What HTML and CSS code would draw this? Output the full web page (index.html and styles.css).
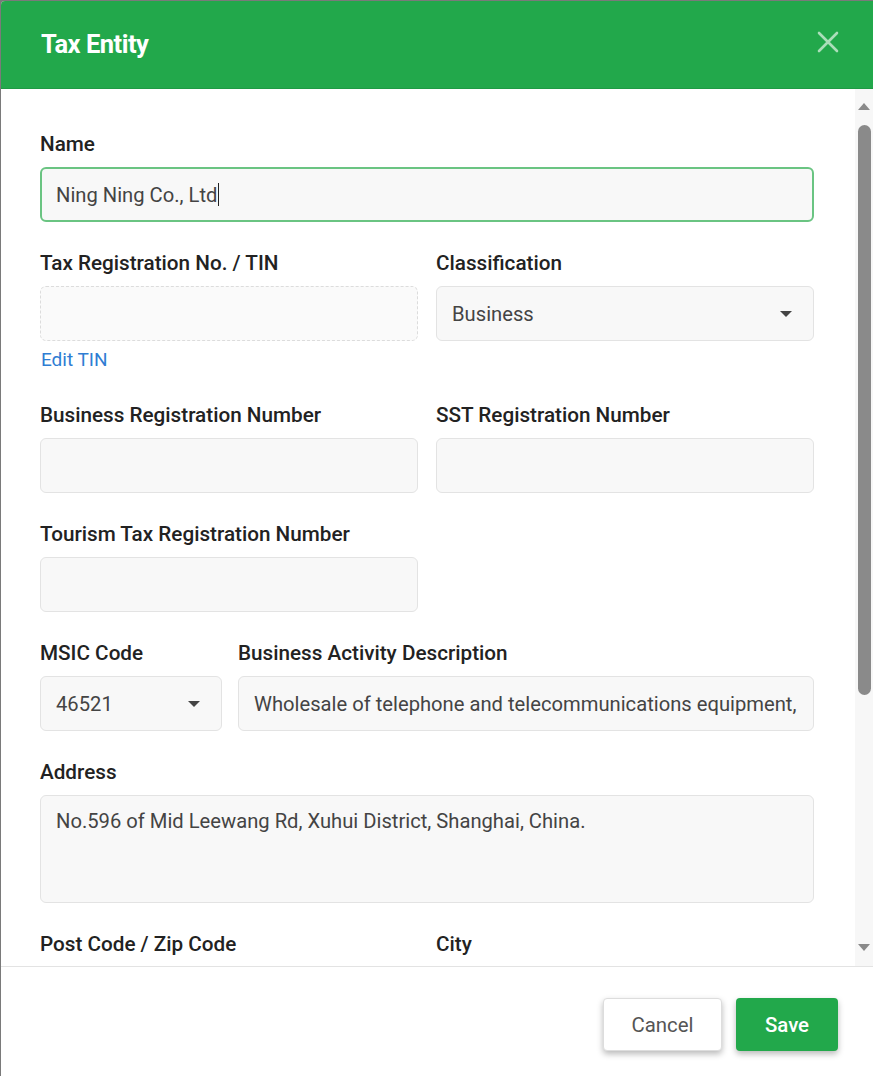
FILE: index.html
```html
<!DOCTYPE html>
<html lang="en">
<head>
<meta charset="utf-8">
<title>Tax Entity</title>
<link rel="stylesheet" href="styles.css">
</head>
<body>
<div class="dialog">
  <header class="header">
    <h1 class="title">Tax Entity</h1>
    <svg class="close" width="22" height="22" viewBox="0 0 22 22" aria-label="Close">
      <path d="M2 2 L20 20 M20 2 L2 20" stroke="currentColor" stroke-width="2.6" stroke-linecap="round" fill="none"/>
    </svg>
  </header>
  <div class="main">
    <div class="content">
      <div class="field">
        <div class="label">Name</div>
        <div class="control focused">Ning Ning Co., Ltd<span class="cursor"></span></div>
      </div>

      <div class="row two">
        <div class="field">
          <div class="label">Tax Registration No. / TIN</div>
          <div class="control dashed"></div>
          <div class="link">Edit TIN</div>
        </div>
        <div class="field">
          <div class="label">Classification</div>
          <div class="control select">Business<span class="caret"></span></div>
        </div>
      </div>

      <div class="row two after-link">
        <div class="field">
          <div class="label">Business Registration Number</div>
          <div class="control"></div>
        </div>
        <div class="field">
          <div class="label">SST Registration Number</div>
          <div class="control"></div>
        </div>
      </div>

      <div class="row two">
        <div class="field">
          <div class="label">Tourism Tax Registration Number</div>
          <div class="control"></div>
        </div>
      </div>

      <div class="row msic">
        <div class="field">
          <div class="label">MSIC Code</div>
          <div class="control select">46521<span class="caret"></span></div>
        </div>
        <div class="field">
          <div class="label">Business Activity Description</div>
          <div class="control nowrap">Wholesale of telephone and telecommunications equipment,</div>
        </div>
      </div>

      <div class="row">
        <div class="field">
          <div class="label">Address</div>
          <div class="control area">No.596 of Mid Leewang Rd, Xuhui District, Shanghai, China.</div>
        </div>
      </div>

      <div class="row two">
        <div class="field">
          <div class="label">Post Code / Zip Code</div>
          <div class="control"></div>
        </div>
        <div class="field">
          <div class="label">City</div>
          <div class="control"></div>
        </div>
      </div>
    </div>
    <div class="scrollbar">
      <span class="arrow up"></span>
      <span class="thumb"></span>
      <span class="spacer"></span>
      <span class="arrow down"></span>
    </div>
  </div>
  <footer class="footer">
    <button class="btn cancel">Cancel</button>
    <button class="btn save">Save</button>
  </footer>
</div>
</body>
</html>
```

FILE: styles.css
```css
* { box-sizing: border-box; }
html, body { margin: 0; padding: 0; }
body {
  background: #7a7a7a;
  font-family: Roboto, "Liberation Sans", Arial, sans-serif;
  width: 873px;
  height: 1076px;
  overflow: hidden;
}
.dialog {
  margin: 1px 0 0 1px;
  height: 1075px;
  background: #ffffff;
  border-top-left-radius: 4px;
  display: flex;
  flex-direction: column;
  overflow: hidden;
}
.header {
  height: 88px;
  flex: none;
  background: #22a84b;
  border-bottom: 1px solid #1e9a44;
  display: flex;
  align-items: center;
  justify-content: space-between;
  padding: 0 34px 2px 40px;
}
.title {
  margin: 0;
  color: #ffffff;
  font-size: 25.5px;
  font-weight: 700;
  letter-spacing: -0.5px;
}
.close {
  color: rgba(255, 255, 255, 0.62);
  margin-top: -4px;
}
.main {
  flex: none;
  height: 877px;
  display: flex;
  overflow: hidden;
}
.content {
  flex: 1;
  overflow: hidden;
  padding: 43px 41px 0 39px;
}
.row { margin-top: 29px; display: grid; grid-template-columns: 1fr; }
.row.two { grid-template-columns: 378px 378px; column-gap: 18px; }
.row.msic { grid-template-columns: 182px 1fr; column-gap: 16px; }
.row.after-link { margin-top: 32px; }
.field { min-width: 0; }
.label {
  font-size: 20.7px;
  font-weight: 500;
  line-height: 24px;
  color: #222222;
  margin-bottom: 11px;
  white-space: nowrap;
}
.control {
  height: 55px;
  border: 1px solid #e3e3e3;
  border-radius: 6px;
  background: #f8f8f8;
  padding: 0 15px;
  display: flex;
  align-items: center;
  font-size: 20.2px;
  color: #444444;
  position: relative;
  white-space: nowrap;
  overflow: hidden;
}
.control.focused { border: 2px solid #6ac482; padding-left: 14px; }
.control.dashed { border: 1px dashed #dcdcdc; background: #fafafa; }
.control.area {
  height: 108px;
  align-items: flex-start;
  padding-top: 14px;
  line-height: 22px;
}
.cursor {
  display: inline-block;
  width: 1px;
  height: 23px;
  background: #222;
  margin-left: 1px;
}
.caret {
  position: absolute;
  right: 21px;
  top: 50%;
  margin-top: -3px;
  width: 0;
  height: 0;
  border-left: 6px solid transparent;
  border-right: 6px solid transparent;
  border-top: 6px solid #444;
}
.link {
  margin-top: 8px;
  font-size: 19px;
  line-height: 22px;
  color: #2f7dd3;
  padding-left: 1px;
}
.scrollbar {
  width: 18px;
  flex: none;
  background: #f7f7f7;
  display: flex;
  flex-direction: column;
  align-items: center;
}
.arrow {
  width: 0;
  height: 0;
  border-left: 6px solid transparent;
  border-right: 6px solid transparent;
}
.arrow.up { border-bottom: 7px solid #8a8a8a; margin-top: 14px; }
.arrow.down { border-top: 7px solid #8a8a8a; margin-bottom: 15px; }
.thumb {
  width: 13px;
  height: 570px;
  margin-top: 15px;
  background: #8a8a8a;
  border-radius: 6.5px;
}
.spacer { flex: 1; }
.footer {
  flex: 1;
  border-top: 1px solid #e3e3e3;
  display: flex;
  justify-content: flex-end;
  align-items: flex-start;
  gap: 14px;
  padding: 31px 35px 0 0;
}
.btn {
  height: 53px;
  border-radius: 4px;
  font-family: Roboto, "Liberation Sans", Arial, sans-serif;
  font-size: 20.4px;
  cursor: pointer;
}
.btn.cancel {
  width: 119px;
  background: #ffffff;
  border: 1px solid #dddddd;
  color: #555555;
  box-shadow: 0 3px 6px rgba(0, 0, 0, 0.28);
}
.btn.save {
  width: 102px;
  background: #22a84b;
  border: none;
  color: #ffffff;
  font-weight: 500;
  box-shadow: 0 3px 6px rgba(0, 0, 0, 0.28);
}
```
